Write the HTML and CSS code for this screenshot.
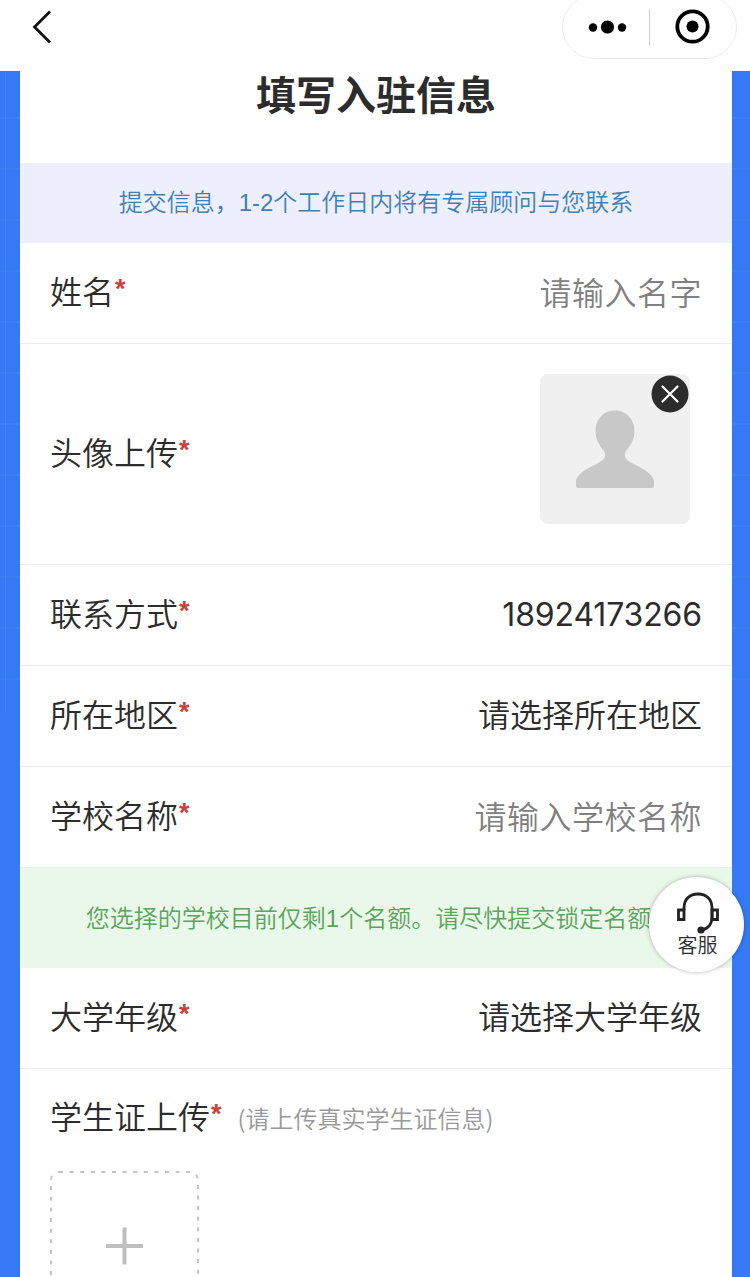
FILE: index.html
```html
<!DOCTYPE html>
<html lang="zh-CN">
<head>
    <meta charset="UTF-8">
    <title>填写入驻信息</title>
    <link rel="stylesheet" href="styles.css">
</head>
<body>
    <header class="navbar">
        <svg class="back" width="24" height="40" viewBox="0 0 24 40" fill="none" stroke="#111" stroke-width="2.800">
            <path d="M19 4.500L3.500 20L19 35.500"/>
        </svg>
        <div class="capsule">
            <svg class="dots" width="40" height="20" viewBox="0 0 40 20">
                <circle cx="5" cy="10.500" r="4.200"/>
                <circle cx="19.500" cy="10" r="6.600"/>
                <circle cx="34" cy="10.500" r="4.200"/>
            </svg>
            <span class="divider"></span>
            <svg class="target" width="36" height="36" viewBox="0 0 36 36">
                <circle cx="17.500" cy="17.500" r="15.200" fill="none" stroke="#000" stroke-width="3.800"/>
                <circle cx="17.500" cy="17.500" r="6"/>
            </svg>
        </div>
    </header>

    <main class="page">
        <form class="card">
            <h1>填写入驻信息</h1>
            <div class="notice">提交信息，1-2个工作日内将有专属顾问与您联系</div>

            <div class="row">
                <label>姓名<i>*</i></label>
                <span class="placeholder">请输入名字</span>
            </div>

            <!-- Avatar -->
            <div class="row row-avatar">
                <label>头像上传<i>*</i></label>
                <div class="avatar">
                    <svg width="150" height="150" viewBox="0 0 150 150">
                        <path fill="#c8c8c8" d="M75 36.500C64 36.500 55.500 45 55.500 57C55.500 66 60 72 64 77C66.500 81 65 85 60 88C51 93 36 99 36 108V112Q36 114 38 114H112Q114 114 114 112V108C114 99 99 93 90 88C85 85 83.500 81 86 77C90 72 94.500 66 94.500 57C94.500 45 86 36.500 75 36.500Z"/>
                    </svg>
                    <svg class="remove" width="38" height="38" viewBox="0 0 38 38">
                        <circle cx="19" cy="19" r="18.500" fill="#2c2c2c"/>
                        <path d="M11.500 11.500L26.500 26.500M26.500 11.500L11.500 26.500" stroke="#fff" stroke-width="2.200" stroke-linecap="round"/>
                    </svg>
                </div>
            </div>

            <div class="row">
                <label>联系方式<i>*</i></label>
                <span class="phone">18924173266</span>
            </div>
            <div class="row">
                <label>所在地区<i>*</i></label>
                <span>请选择所在地区</span>
            </div>
            <div class="row">
                <label>学校名称<i>*</i></label>
                <span class="placeholder">请输入学校名称</span>
            </div>
            <div class="quota">您选择的学校目前仅剩1个名额。请尽快提交锁定名额</div>
            <div class="row">
                <label>大学年级<i>*</i></label>
                <span>请选择大学年级</span>
            </div>

            <!-- Student card -->
            <div class="upload">
                <div class="upload-title">
                    <label>学生证上传<i>*</i></label>
                    <small>(请上传真实学生证信息)</small>
                </div>
                <div class="upload-box">
                    <svg width="150" height="150" viewBox="0 0 150 150" fill="none">
                        <rect x="1" y="1" width="147" height="147" rx="8" stroke="#c4c4c4" stroke-width="2" stroke-dasharray="4 6.600"/>
                        <path d="M56 75H93M74.500 56.500V93.500" stroke="#bfbfbf" stroke-width="4"/>
                    </svg>
                </div>
            </div>
        </form>
    </main>

    <div class="service">
        <svg width="44" height="42" viewBox="0 0 44 42" fill="none" stroke="#222" stroke-width="2.800">
            <path d="M8 18V16C8 7 14 2 22 2S36 7 36 16V25C36 32 32 37 25 38"/>
            <path d="M8 18H2.500V27.500H8ZM36 18H41.500V27.500H36Z"/>
            <circle cx="25" cy="38" r="2.200" fill="#222"/>
        </svg>
        <span>客服</span>
    </div>
</body>
</html>
```
FILE: styles.css
```css
* {
    box-sizing: border-box;
}
body {
    margin: 0;
    height: 1277px;
    overflow: hidden;
    display: flex;
    flex-direction: column;
    background: #fff;
    color: #2c2c2c;
    font-family: "Liberation Sans", "Noto Sans CJK SC", sans-serif;
    font-size: 32px;
    font-weight: 350;
}
svg {
    display: block;
}
.navbar {
    height: 71px;
    flex: none;
    display: flex;
    justify-content: space-between;
    align-items: flex-start;
    padding: 0 13px 0 31px;
}
.back {
    margin-top: 7px;
}
.capsule {
    width: 175px;
    height: 64px;
    margin-top: -5px;
    border: 1px solid #ececec;
    border-radius: 32px;
    display: flex;
    align-items: center;
    padding-left: 25px;
}
.divider {
    width: 1px;
    height: 37px;
    margin: 0 25px 0 21px;
    background: #cfcfcf;
}
.page {
    flex: 1;
    min-height: 0;
    padding: 0 18px 0 20px;
    background:
        linear-gradient(#4584f8, #4584f8) 5px 0 / 1px 640px no-repeat,
        repeating-linear-gradient(transparent 0 46px, #3b7ef6 46px 48px, transparent 48px 51px) 0 0 / 100% 612px no-repeat,
        #357af4;
}
.card {
    height: 100%;
    overflow: hidden;
    background: #fff;
}
h1 {
    margin: 0;
    height: 92px;
    line-height: 50px;
    font-size: 40px;
    font-weight: 700;
    text-align: center;
}
.notice,
.quota {
    font-size: 24px;
    text-align: center;
    white-space: nowrap;
}
.notice {
    height: 80px;
    line-height: 80px;
    background: #edf0fc;
    color: #4180b5;
}
.quota {
    height: 100px;
    line-height: 101px;
    padding-right: 15px;
    background: #eaf8e9;
    color: #5ba35e;
}
.row {
    height: 101px;
    display: flex;
    justify-content: space-between;
    align-items: center;
    padding: 0 30px 6px;
    border-bottom: 1px solid #ececec;
}
.row-avatar {
    height: 221px;
    padding-right: 42px;
}
label i {
    margin-left: 1px;
    color: #cb4038;
    font-size: 27px;
    font-style: normal;
    font-weight: bold;
    line-height: 0;
    vertical-align: 6px;
}
.placeholder {
    margin-top: 2px;
    color: #808080;
    letter-spacing: 0.5px;
}
.phone {
    margin-top: 4px;
    font-family: Inter, sans-serif;
    font-weight: 400;
    letter-spacing: -0.15px;
}
.avatar {
    position: relative;
    width: 150px;
    height: 150px;
    margin-top: -4px;
    border-radius: 8px;
    background: #f0f0f0;
}
.remove {
    position: absolute;
    top: 1px;
    right: 1px;
}
.upload {
    padding: 22px 30px 0;
}
.upload-title {
    display: flex;
    align-items: center;
    gap: 16px;
    height: 48px;
}
.upload-title small {
    margin-top: 5px;
    font-family: "Noto Sans CJK SC", sans-serif;
    font-size: 24px;
    color: #999;
}
.upload-box {
    margin-top: 32px;
}
/* floating customer service button */
.service {
    position: absolute;
    top: 877px;
    left: 649px;
    width: 95px;
    height: 95px;
    border-radius: 50%;
    background: #fff;
    box-shadow: 0 0 4px rgba(0,0,0,0.3);
    display: flex;
    flex-direction: column;
    align-items: center;
    padding: 15px 0 0 2px;
    font-size: 20px;
    line-height: 24px;
}
```
